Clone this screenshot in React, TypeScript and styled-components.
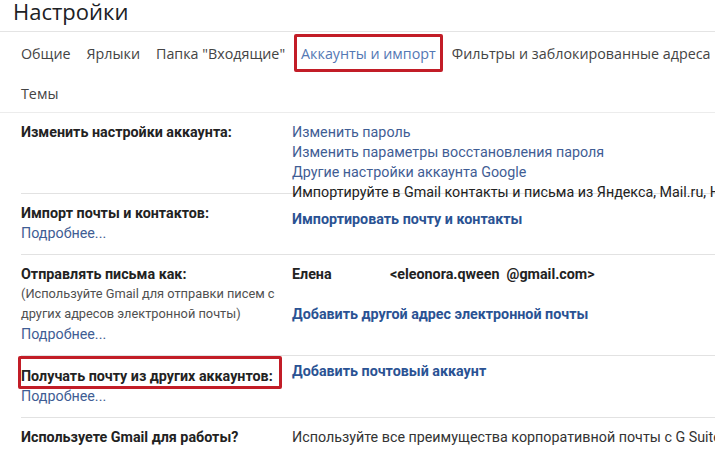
import styled, { createGlobalStyle } from "styled-components";

const GlobalStyle = createGlobalStyle`
    body {
        margin: 0;
        background: #ffffff;
        font-family: Roboto, "Liberation Sans", Arial, sans-serif;
        color: #222222;
        overflow: hidden;
    }
`;

const tabs = ["Общие", "Ярлыки", "Папка \"Входящие\"", "Аккаунты и импорт", "Фильтры и заблокированные адреса", "Темы"];
const activeTab = "Аккаунты и импорт";

function App() {
    return (
        <Page>
            <GlobalStyle />
            <Header>Настройки</Header>
            <TabBar>
                {tabs.map((t) => (
                    <Tab key={t} $active={t === activeTab}>{t}</Tab>
                ))}
            </TabBar>

            <Table>
                <Row>
                    <LabelCell>
                        <Label>Изменить настройки аккаунта:</Label>
                    </LabelCell>
                    <ValueCell>
                        <Link>Изменить пароль</Link>
                        <Link>Изменить параметры восстановления пароля</Link>
                        <Link>Другие настройки аккаунта Google</Link>
                    </ValueCell>
                </Row>

                <Row>
                    <LabelCell>
                        <Label>Импорт почты и контактов:</Label>
                        <Link>Подробнее...</Link>
                    </LabelCell>
                    <ValueCell>
                        <Note>Импортируйте в Gmail контакты и письма из Яндекса, Mail.ru, Hotmail и других сервисов</Note>
                        <BoldLink $offset={7}>Импортировать почту и контакты</BoldLink>
                    </ValueCell>
                </Row>

                <Row>
                    <LabelCell>
                        <Label>Отправлять письма как:</Label>
                        <Hint>(Используйте Gmail для отправки писем с других адресов электронной почты)</Hint>
                        <Link>Подробнее...</Link>
                    </LabelCell>
                    <ValueCell>
                        <Sender>
                            <strong>Елена</strong>
                            <span>&lt;eleonora.qween&nbsp; @gmail.com&gt;</span>
                        </Sender>
                        <BoldLink $offset={20}>Добавить другой адрес электронной почты</BoldLink>
                    </ValueCell>
                </Row>

                <Row $pad={0}>
                    <LabelCell>
                        <Highlight>
                            <Label>Получать почту из других аккаунтов:</Label>
                        </Highlight>
                        <Link>Подробнее...</Link>
                    </LabelCell>
                    <ValueCell>
                        <BoldLink $offset={5}>Добавить почтовый аккаунт</BoldLink>
                    </ValueCell>
                </Row>

                <Row>
                    <LabelCell>
                        <Label>Используете Gmail для работы?</Label>
                    </LabelCell>
                    <ValueCell>
                        <Plain>Используйте все преимущества корпоративной почты с G Suite</Plain>
                    </ValueCell>
                </Row>
            </Table>
        </Page>
    );
}

const Page = styled.div`
    width: 715px;
    height: 451px;
    overflow: hidden;
    font-size: 14.3px;
    line-height: 20px;
`;

const Header = styled.div`
    height: 32px;
    padding-left: 13px;
    border-bottom: 1px solid #e4e4e4;
    font-family: "Open Sans", sans-serif;
    font-size: 22px;
    line-height: 22px;
    color: #202124;
    box-sizing: border-box;
`;

const TabBar = styled.div`
    display: flex;
    flex-wrap: wrap;
    width: 722px;
    box-sizing: border-box;
    padding-left: 13px;
    border-bottom: 1px solid #ececec;
`;

const Tab = styled.div<{ $active?: boolean }>`
    height: 38px;
    margin: 2px 1px 0;
    padding: 0 4px;
    line-height: 33px;
    box-sizing: border-box;
    font-family: "Open Sans", sans-serif;
    font-size: 14.3px;
    white-space: nowrap;
    color: ${(p) => (p.$active ? "#5478b4" : "#444444")};
    border: 3px solid ${(p) => (p.$active ? "#c21d27" : "transparent")};
    border-radius: 2px;
`;

const Table = styled.div`
    padding-left: 21px;
`;

const Row = styled.div<{ $pad?: number }>`
    display: grid;
    grid-template-columns: 271px 1fr;
    border-top: 1px solid #e2e2e2;
    padding-top: ${(p) => (p.$pad ?? 9)}px;
    padding-bottom: 11px;
    &:first-child {
        border-top: none;
    }
`;

const LabelCell = styled.div`
    display: flex;
    flex-direction: column;
    align-items: flex-start;
`;

const ValueCell = styled.div`
    display: flex;
    flex-direction: column;
    align-items: flex-start;
    white-space: nowrap;
`;

const Label = styled.div`
    font-weight: 700;
    color: #222222;
`;

const Hint = styled.div`
    color: #505050;
    font-size: 12.8px;
    width: 262px;
`;

const Link = styled.div`
    color: #3f5d94;
    cursor: pointer;
`;

const BoldLink = styled.div<{ $offset?: number }>`
    color: #2a5293;
    font-weight: 700;
    cursor: pointer;
    margin-top: ${(p) => p.$offset ?? 0}px;
`;

const Note = styled.div`
    color: #222222;
    margin-top: -21px;
`;

const Plain = styled.div`
    color: #333333;
`;

const Sender = styled.div`
    display: flex;
    strong {
        width: 98px;
        color: #222222;
    }
    span {
        color: #222222;
        font-weight: 700;
    }
`;

const Highlight = styled.div`
    border: 3px solid #c21d27;
    border-radius: 2px;
    margin-left: -3px;
    padding: 7px 6px 0 0;
    margin-bottom: -3px;
`;

export default App;
